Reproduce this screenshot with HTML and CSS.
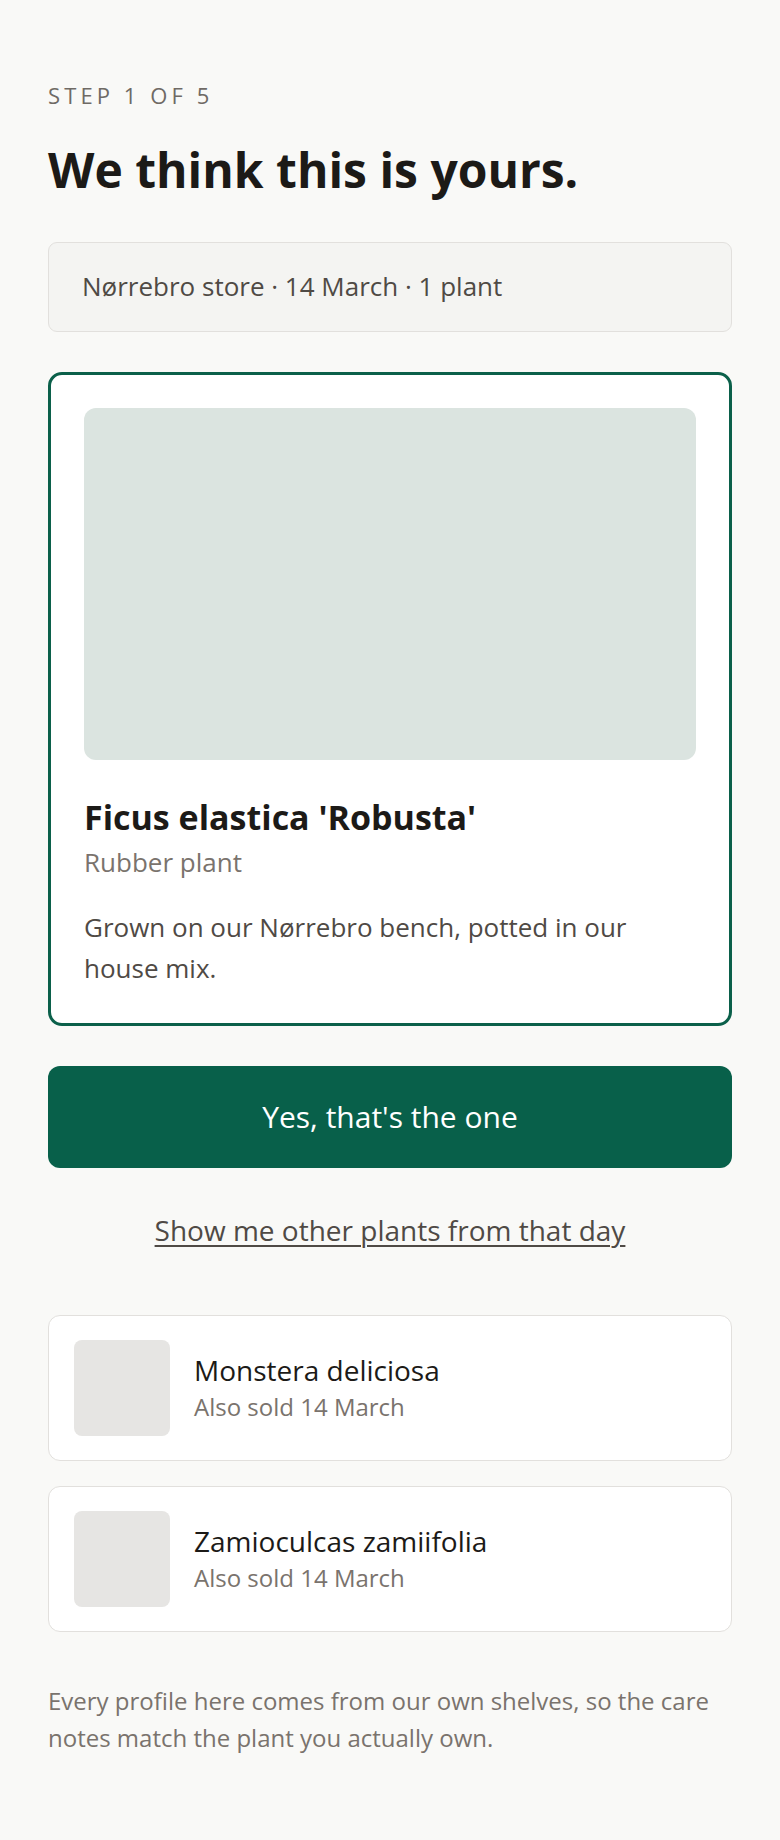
FILE: index.html
```html
<!DOCTYPE html>
<html lang="en">
<head>
  <meta charset="UTF-8" />
  <meta name="viewport" content="width=device-width, initial-scale=1.0"/>
  <title>Find your plant</title>
  <link rel="stylesheet" href="styles.css">
</head>
<body>
  <main class="page">
    <p class="step">Step 1 of 5</p>
    <h1 class="title">We think this is yours.</h1>

    <div class="receipt">Nørrebro store · 14 March · 1 plant</div>

    <div class="match">
      <div class="match-photo"></div>
      <h2 class="match-name">Ficus elastica 'Robusta'</h2>
      <p class="match-common">Rubber plant</p>
      <p class="match-desc">Grown on our Nørrebro bench, potted in our house mix.</p>
    </div>

    <button class="confirm">Yes, that's the one</button>

    <a class="others-link" href="#">Show me other plants from that day</a>

    <ul class="others">
      <li class="other">
        <div class="other-thumb"></div>
        <div class="other-text">
          <div class="other-name">Monstera deliciosa</div>
          <div class="other-date">Also sold 14 March</div>
        </div>
      </li>
      <li class="other">
        <div class="other-thumb"></div>
        <div class="other-text">
          <div class="other-name">Zamioculcas zamiifolia</div>
          <div class="other-date">Also sold 14 March</div>
        </div>
      </li>
    </ul>

    <p class="footnote">Every profile here comes from our own shelves, so the care notes match the plant you actually own.</p>
  </main>
</body>
</html>
```

FILE: styles.css
```css
* {
  box-sizing: border-box;
}
body {
  margin: 0;
  background-color: #f9f9f7;
  font-family: "Open Sans", "Noto Sans", sans-serif;
  color: #1c1a17;
}
.page {
  padding: 80px 48px 60px;
  display: flex;
  flex-direction: column;
}
.step {
  margin: 0;
  font-size: 22px;
  line-height: 1.4;
  letter-spacing: 4.1px;
  text-transform: uppercase;
  color: #6f6a65;
}
.title {
  margin: 30px 0 0;
  font-size: 48px;
  line-height: 1.2;
  font-weight: 700;
  color: #1c1a17;
}
.receipt {
  margin-top: 44px;
  padding: 23px 33px;
  background-color: #f4f4f2;
  border: 1px solid #e2e0dd;
  border-radius: 9px;
  font-size: 26px;
  line-height: 1.6;
  color: #4f4a45;
}
.match {
  margin-top: 40px;
  padding: 33px;
  background-color: #fff;
  border: 3px solid #0b604a;
  border-radius: 14px;
}
.match-photo {
  height: 352px;
  background-color: #dbe4e0;
  border-radius: 12px;
}
.match-name {
  margin: 35px 0 0;
  font-size: 34px;
  line-height: 1.3;
  font-weight: 700;
  color: #1c1a17;
}
.match-common {
  margin: 5px 0 0;
  font-size: 26px;
  line-height: 1.4;
  color: #7a736d;
}
.match-desc {
  margin: 26px 0 0;
  font-size: 26px;
  line-height: 1.6;
  color: #4f4a45;
}
.confirm {
  margin-top: 40px;
  height: 102px;
  border: none;
  border-radius: 12px;
  background-color: #08604a;
  color: #fff;
  font-family: inherit;
  font-size: 30px;
  cursor: pointer;
}
.others-link {
  margin-top: 40px;
  align-self: center;
  font-size: 28px;
  line-height: 1.6;
  color: #4f4a45;
  text-decoration: underline;
  text-decoration-thickness: 1.5px;
  text-underline-offset: 4px;
}
.others {
  list-style: none;
  margin: 62px 0 0;
  padding: 0;
  display: flex;
  flex-direction: column;
  gap: 25px;
}
.other {
  display: flex;
  align-items: center;
  gap: 24px;
  padding: 24px 25px;
  background-color: #fff;
  border: 1px solid #e2e0dd;
  border-radius: 12px;
}
.other-thumb {
  width: 96px;
  height: 96px;
  flex-shrink: 0;
  background-color: #e6e5e3;
  border-radius: 8px;
}
.other-name {
  font-size: 28px;
  line-height: 1.3;
  color: #1c1a17;
}
.other-date {
  margin-top: 2px;
  font-size: 24px;
  line-height: 1.4;
  color: #7a736d;
}
.footnote {
  margin: 50px 0 0;
  font-size: 24px;
  line-height: 1.57;
  color: #7a736d;
}
```
